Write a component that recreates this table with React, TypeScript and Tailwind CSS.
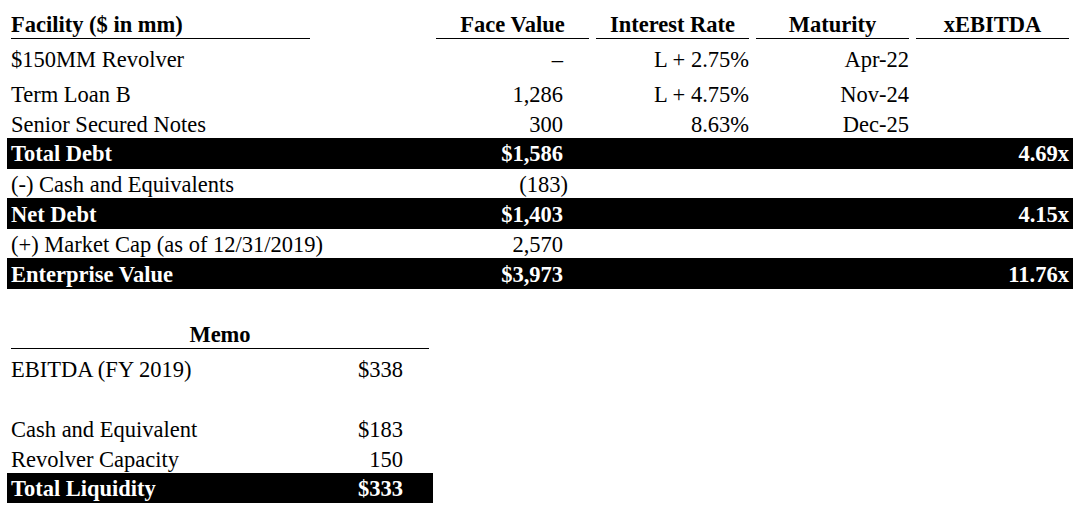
import React from "react";

type R = {
  label: string;
  face?: React.ReactNode;
  rate?: string;
  mat?: string;
  mult?: string;
  h: string;
  pb: string;
  dark?: boolean;
};

const rows: R[] = [
  { label: "$150MM Revolver", face: "–", rate: "L + 2.75%", mat: "Apr-22", h: "h-[35px]", pb: "pb-[1px]" },
  { label: "Term Loan B", face: "1,286", rate: "L + 4.75%", mat: "Nov-24", h: "h-[34px]", pb: "pb-0" },
  { label: "Senior Secured Notes", face: "300", rate: "8.63%", mat: "Dec-25", h: "h-[30px]", pb: "pb-0" },
  { label: "Total Debt", face: "$1,586", mult: "4.69x", h: "h-[31px]", pb: "pb-[2px]", dark: true },
  {
    label: "(-) Cash and Equivalents",
    face: (
      <>
        (183<span className="-mr-[5px]">)</span>
      </>
    ),
    h: "h-[29px]",
    pb: "pb-0",
  },
  { label: "Net Debt", face: "$1,403", mult: "4.15x", h: "h-[31px]", pb: "pb-[1px]", dark: true },
  { label: "(+) Market Cap (as of 12/31/2019)", face: "2,570", h: "h-[29px]", pb: "pb-0" },
  { label: "Enterprise Value", face: "$3,973", mult: "11.76x", h: "h-[31px]", pb: "pb-[1px]", dark: true },
];

const grid =
  "grid grid-cols-[4px_299px_126px_153px_7px_153px_7px_153px_7px_153px_4px] items-end";

function TopRow({ r }: { r: R }) {
  return (
    <div
      className={`${grid} ${r.h} ${r.pb} ${r.dark ? "bg-black text-white font-bold" : "text-black"}`}
    >
      <div />
      <div className="whitespace-nowrap">{r.label}</div>
      <div />
      <div className="text-right pr-[26px] whitespace-nowrap">{r.face ?? ""}</div>
      <div />
      <div className="text-right whitespace-nowrap">{r.rate ?? ""}</div>
      <div />
      <div className="text-right whitespace-nowrap">{r.mat ?? ""}</div>
      <div />
      <div className="text-right whitespace-nowrap">{r.mult ?? ""}</div>
      <div />
    </div>
  );
}

const memoGrid = "grid grid-cols-[4px_299px_119px_4px] items-end";

export default function App() {
  return (
    <div className="w-[1084px] h-[512px] bg-white text-black text-[22.5px] leading-[26px] pl-[7px] overflow-hidden font-['Liberation_Serif','DejaVu_Serif',serif]">
      <div className="w-[1066px]">
        {/* header */}
        <div className={`${grid} h-[39px] font-bold`}>
          <div />
          <div className="h-[39px] flex items-end border-b border-black whitespace-nowrap">
            Facility ($ in mm)
          </div>
          <div />
          <div className="h-[39px] flex items-end justify-center border-b border-black whitespace-nowrap">
            Face Value
          </div>
          <div />
          <div className="h-[39px] flex items-end justify-center border-b border-black whitespace-nowrap">
            Interest Rate
          </div>
          <div />
          <div className="h-[39px] flex items-end justify-center border-b border-black whitespace-nowrap">
            Maturity
          </div>
          <div />
          <div className="h-[39px] flex items-end justify-center border-b border-black whitespace-nowrap">
            xEBITDA
          </div>
          <div />
        </div>
        {rows.map((r) => (
          <TopRow key={r.label} r={r} />
        ))}
      </div>

      {/* memo */}
      <div className="w-[426px]">
        <div className={`${memoGrid} h-[60px]`}>
          <div />
          <div className="col-span-2 h-[60px] flex items-end justify-center border-b border-black font-bold">
            Memo
          </div>
          <div />
        </div>
        <div className={`${memoGrid} h-[34px]`}>
          <div />
          <div className="whitespace-nowrap">EBITDA (FY 2019)</div>
          <div className="text-right pr-[26px]">$338</div>
          <div />
        </div>
        <div className="h-[30px]" />
        <div className={`${memoGrid} h-[30px]`}>
          <div />
          <div className="whitespace-nowrap">Cash and Equivalent</div>
          <div className="text-right pr-[26px]">$183</div>
          <div />
        </div>
        <div className={`${memoGrid} h-[30px]`}>
          <div />
          <div className="whitespace-nowrap">Revolver Capacity</div>
          <div className="text-right pr-[26px]">150</div>
          <div />
        </div>
        <div className={`${memoGrid} h-[30px] pb-[1px] bg-black text-white font-bold`}>
          <div />
          <div className="whitespace-nowrap">Total Liquidity</div>
          <div className="text-right pr-[26px]">$333</div>
          <div />
        </div>
      </div>
    </div>
  );
}
